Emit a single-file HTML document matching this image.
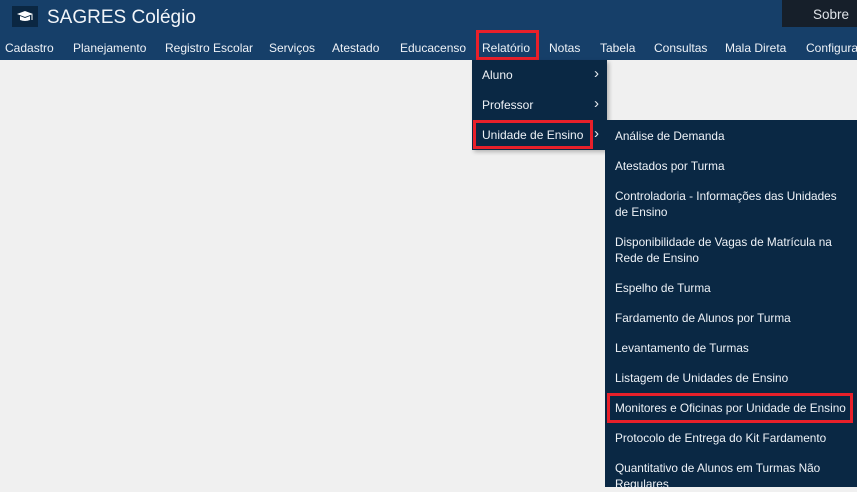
<!DOCTYPE html>
<html><head><meta charset="utf-8"><style>
*{margin:0;padding:0;box-sizing:border-box}
body{width:857px;height:487px;overflow:hidden;background:#f0f0f0;font-family:"Liberation Sans",sans-serif;position:relative}
#hdr{position:absolute;left:0;top:0;width:857px;height:60px;background:#163f69}
.a{position:absolute;white-space:nowrap;font-size:12px;color:#eef2f7}
#logo{position:absolute;left:12px;top:6px;width:26px;height:21px;background:#0b2742}
#title{position:absolute;left:47px;top:7px;font-size:19px;color:#f2f5f9}
#sobre{position:absolute;left:782px;top:0;width:75px;height:27px;background:#161f2a;color:#dfe3e8;font-size:13.5px;padding:7px 0 0 31px}
.red{position:absolute;border:3px solid #e8202a}
#dd1{position:absolute;left:472px;top:60px;width:135px;height:90px;background:#0a2844;box-shadow:2px 2px 4px rgba(0,0,0,.25)}
#dd2{position:absolute;left:605px;top:120px;width:252px;height:367px;background:#0a2844}
.m{color:#eef2f7;font-size:12px;position:absolute;white-space:nowrap}
.s{position:absolute;left:615px;color:#eef2f7;font-size:11.8px;line-height:16px;white-space:nowrap}
.ch{position:absolute;color:#e6eaef;font-size:15px}
</style></head><body>
<div id="hdr"></div>
<div id="logo"><svg width="26" height="21" viewBox="0 0 26 21"><path d="M5 8 L13 5 L21 8 L13 11 Z" fill="#fff"/><path d="M8 10 L8 14 Q13 16 18 14 L18 10 L13 12 Z" fill="#fff"/><path d="M20 8.5 L20 14" stroke="#fff" stroke-width="1"/></svg></div>
<div id="title">SAGRES Colégio</div>
<div id="sobre">Sobre</div>
<div class="a" style="left:5px;top:41px">Cadastro</div>
<div class="a" style="left:73px;top:41px">Planejamento</div>
<div class="a" style="left:165px;top:41px">Registro Escolar</div>
<div class="a" style="left:269px;top:41px">Serviços</div>
<div class="a" style="left:332px;top:41px">Atestado</div>
<div class="a" style="left:400px;top:41px">Educacenso</div>
<div class="a" style="left:482px;top:41px">Relatório</div>
<div class="a" style="left:549px;top:41px">Notas</div>
<div class="a" style="left:600px;top:41px">Tabela</div>
<div class="a" style="left:654px;top:41px">Consultas</div>
<div class="a" style="left:725px;top:41px">Mala Direta</div>
<div class="a" style="left:806px;top:41px">Configurações</div>
<div class="red" style="left:476px;top:30px;width:63px;height:30px"></div>
<div id="dd1"></div>
<div class="m" style="left:482px;top:68px">Aluno</div><div class="ch" style="left:594px;top:65px">›</div>
<div class="m" style="left:482px;top:98px">Professor</div><div class="ch" style="left:594px;top:95px">›</div>
<div class="m" style="left:482px;top:128px">Unidade de Ensino</div><div class="ch" style="left:594px;top:125px">›</div>
<div class="red" style="left:473px;top:120px;width:120px;height:29px"></div>
<div id="dd2"></div>
<div class="s" style="top:128px">Análise de Demanda</div>
<div class="s" style="top:158px">Atestados por Turma</div>
<div class="s" style="top:188px">Controladoria - Informações das Unidades<br>de Ensino</div>
<div class="s" style="top:234px">Disponibilidade de Vagas de Matrícula na<br>Rede de Ensino</div>
<div class="s" style="top:280px">Espelho de Turma</div>
<div class="s" style="top:310px">Fardamento de Alunos por Turma</div>
<div class="s" style="top:340px">Levantamento de Turmas</div>
<div class="s" style="top:370px">Listagem de Unidades de Ensino</div>
<div class="s" style="top:400px">Monitores e Oficinas por Unidade de Ensino</div>
<div class="s" style="top:430px">Protocolo de Entrega do Kit Fardamento</div>
<div class="s" style="top:460px">Quantitativo de Alunos em Turmas Não<br>Regulares</div>
<div class="red" style="left:607px;top:393px;width:246px;height:30px"></div>
</body></html>
